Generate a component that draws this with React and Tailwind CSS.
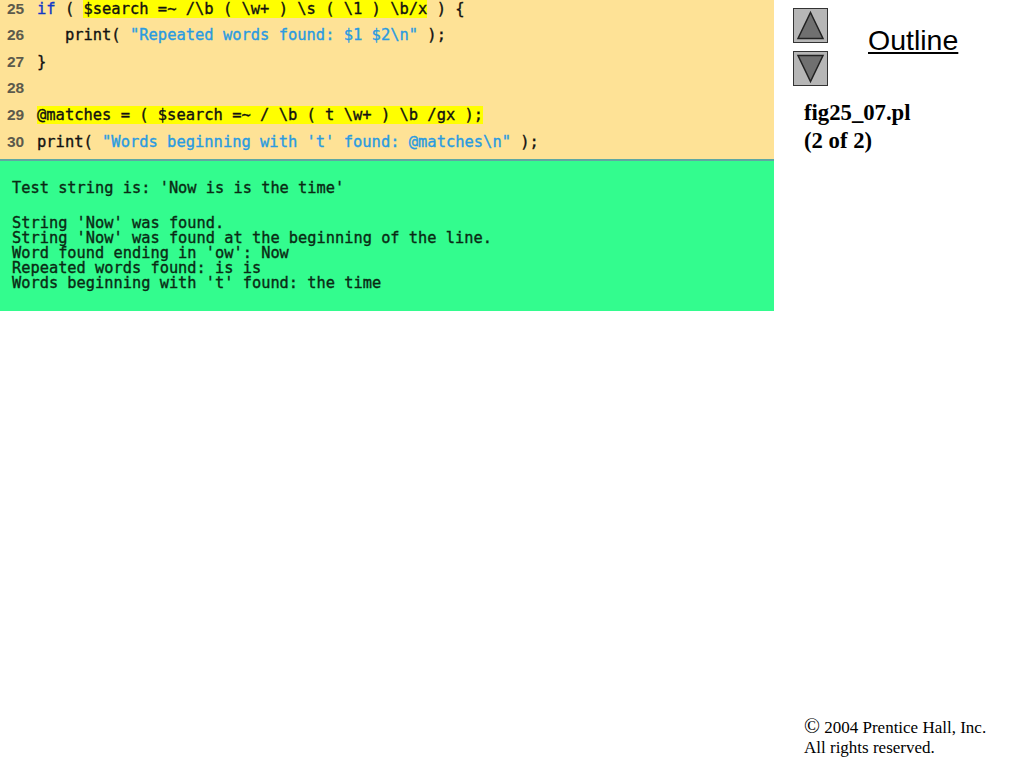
import React from 'react';

const Mark = ({ children }) => <span className="bg-[#ffff00]">{children}</span>;
const Str = ({ children }) => <span className="text-[#2a9be0]">{children}</span>;

const lines = [
  { n: 25, code: <><span className="text-[#1238c8]">if</span> ( <Mark>{'$search =~ /\\b ( \\w+ ) \\s ( \\1 ) \\b/x'}</Mark> {') {'}</> },
  { n: 26, code: <>{'   print( '}<Str>{'"Repeated words found: $1 $2\\n"'}</Str>{' );'}</> },
  { n: 27, code: <>{'}'}</> },
  { n: 28, code: <>{' '}</> },
  { n: 29, code: <Mark>{'@matches = ( $search =~ / \\b ( t \\w+ ) \\b /gx );'}</Mark> },
  { n: 30, code: <>{'print( '}<Str>{'"Words beginning with \'t\' found: @matches\\n"'}</Str>{' );'}</> },
];

const outputLines = [
  "String 'Now' was found.",
  "String 'Now' was found at the beginning of the line.",
  "Word found ending in 'ow': Now",
  'Repeated words found: is is',
  "Words beginning with 't' found: the time",
];

const ArrowButton = ({ down }) => (
  <svg width="35" height="35" viewBox="0 0 35 35" className="block">
    <rect x="0.5" y="0.5" width="34" height="34" fill="#b6b6b6" stroke="#333333" />
    <polygon
      points={down ? '5,4.5 30,4.5 17.5,30.5' : '17.5,4.5 30,30.5 5,30.5'}
      fill="#707070"
      stroke="#222222"
      strokeWidth="1.5"
    />
  </svg>
);

export default function App() {
  return (
    <div className="flex h-screen overflow-hidden bg-white">
      <div className="w-[774px] shrink-0">
        <div className="h-[159px] overflow-hidden bg-[#fee296] font-['DejaVu_Sans_Mono',monospace] text-[15.45px] text-[#111111] [-webkit-text-stroke:0.35px]">
          <div className="mt-[-4px]">
            {lines.map((l) => (
              <div key={l.n} className="flex h-[26.6px] items-center">
                <span className="mb-[2px] w-[37px] shrink-0 pl-[7px] font-['Liberation_Sans',sans-serif] text-[15.5px] font-bold text-[#5c5a4c] [-webkit-text-stroke:0]">
                  {l.n}
                </span>
                <span className="whitespace-pre">{l.code}</span>
              </div>
            ))}
          </div>
        </div>
        <div className="h-[152px] border-t-2 border-[#5fa8a2] bg-[#33fc8e] pl-[12px] pt-[20px] font-['DejaVu_Sans_Mono',monospace] text-[15.33px] leading-[15px] text-[#0a2a14] [-webkit-text-stroke:0.35px]">
          <div className="mb-[19.5px] whitespace-pre">Test string is: 'Now is is the time'</div>
          {outputLines.map((line) => (
            <div key={line} className="whitespace-pre">{line}</div>
          ))}
        </div>
      </div>

      <div className="flex flex-1 flex-col pb-[10px]">
        <div className="flex pl-[19px] pt-[8px]">
          <div className="flex flex-col gap-[8px]">
            <ArrowButton />
            <ArrowButton down />
          </div>
          <div className="ml-[40px] mt-[14px] font-['Liberation_Sans',sans-serif] text-[28.5px] leading-[36px] text-black underline">
            Outline
          </div>
        </div>
        <div className="ml-[30px] mt-[13px] font-['Liberation_Serif',serif] text-[22.7px] font-bold leading-[28px] text-black">
          <div>fig25_07.pl</div>
          <div>(2 of 2)</div>
        </div>
        <div className="ml-[30px] mt-auto font-['Liberation_Serif',serif] text-[17px] leading-[20px] text-black">
          <div><span className="text-[21px] leading-[20px]">©</span> 2004 Prentice Hall, Inc.</div>
          <div>All rights reserved.</div>
        </div>
      </div>
    </div>
  );
}
